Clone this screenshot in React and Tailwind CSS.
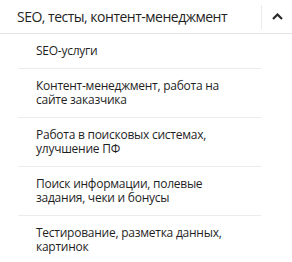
import { useState } from 'react';

const items = [
  'SEO-услуги',
  'Контент-менеджмент, работа на сайте заказчика',
  'Работа в поисковых системах, улучшение ПФ',
  'Поиск информации, полевые задания, чеки и бонусы',
  'Тестирование, разметка данных, картинок',
];

export default function App() {
  const [open, setOpen] = useState(true);

  return (
    <div className="w-[292px] h-[262px] bg-white text-[#1f1f1f] overflow-hidden" style={{ fontFamily: '"Open Sans", "Noto Sans", sans-serif' }}>
      {/* Section header */}
      <div className="flex items-center h-[34px] border-b border-[#e3e3e3]">
        <div className="flex-1 pl-[17px] text-[14px] leading-[18px] tracking-[-0.5px]">SEO, тесты, контент-менеджмент</div>
        <div className="w-px h-[24px] bg-[#ebebeb]" />
        <button onClick={() => setOpen(!open)} className="w-[30px] h-full flex items-center justify-center">
          <svg width="11" height="7" viewBox="0 0 11 7" fill="none" stroke="#2b2b2b" strokeWidth="2.2">
            <path d="M1 6l4.5-4.5L10 6" />
          </svg>
        </button>
      </div>

      {/* Sub items */}
      {open && (
        <ul className="ml-[18px] w-[243px]">
          {items.map((t, i) => (
            <li key={i} className={`pl-[18px] pr-4 py-[10px] text-[12px] leading-[14px] tracking-[-0.25px] ${i < items.length - 1 ? 'border-b border-[#ececec]' : ''}`}>
              {t}
            </li>
          ))}
        </ul>
      )}
    </div>
  );
}
